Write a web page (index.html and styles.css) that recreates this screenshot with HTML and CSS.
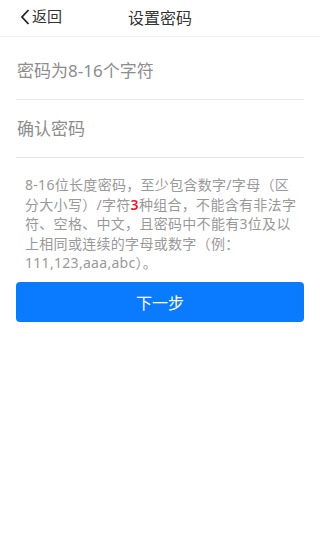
FILE: index.html
```html
<!DOCTYPE html>
<html lang="zh-CN">
<head>
<meta charset="utf-8">
<meta name="viewport" content="width=device-width, initial-scale=1">
<title>设置密码</title>
<link rel="stylesheet" href="styles.css">
</head>
<body>
<header class="nav">
  <a class="back" href="#">
    <svg class="chev" width="10" height="16" viewBox="0 0 10 16"><path d="M8.5 1 L2 8 L8.5 15" fill="none" stroke="#222" stroke-width="1.8"/></svg>
    <span>返回</span>
  </a>
  <h1 class="title">设置密码</h1>
</header>
<main class="form">
  <div class="field"><input class="input" type="password" placeholder="密码为8-16个字符"></div>
  <div class="field"><input class="input" type="password" placeholder="确认密码"></div>
  <p class="tip">8-16位长度密码，至少包含数字/字母（区分大小写）/字符<span class="red">3</span>种组合，不能含有非法字符、空格、中文，且密码中不能有3位及以上相同或连续的字母或数字（例：111,123,aaa,abc）。</p>
  <button class="next" type="button">下一步</button>
</main>
</body>
</html>
```
FILE: styles.css
```css
* { box-sizing: border-box; }
html, body { margin: 0; padding: 0; background: #fff; }
body {
  font-family: "Noto Sans", "Noto Sans CJK SC", sans-serif;
  color: #333;
  width: 320px;
}
.nav {
  position: relative;
  height: 37px;
  border-bottom: 1px solid #f0f0f0;
  display: flex;
  align-items: center;
  justify-content: center;
}
.back {
  position: absolute;
  left: 20px;
  top: 0;
  height: 36px;
  display: flex;
  align-items: center;
  gap: 2px;
  color: #333;
  text-decoration: none;
  font-size: 15px;
}
.chev { display: block; margin-top: -2px; }
.back span { line-height: 1; margin-top: -4px; }
.title {
  margin: -3px 0 0;
  font-size: 16px;
  font-weight: normal;
  color: #333;
}
.form {
  padding: 5px 16px 0;
}
.field {
  height: 58px;
  border-bottom: 1px solid #e6e6e6;
  display: flex;
  align-items: center;
}
.input {
  border: 0;
  outline: 0;
  padding: 0 0 0 1px;
  width: 100%;
  font-family: inherit;
  font-size: 17px;
  color: #333;
  background: transparent;
}
.input::placeholder { color: #8c8c8c; }
.tip {
  margin: 17px 4px 0 9px;
  font-size: 14px;
  line-height: 19.5px;
  color: #999;
  letter-spacing: 0.3px;
}
.red { color: #f0142d; font-weight: 600; }
.next {
  display: block;
  width: 100%;
  height: 40px;
  margin-top: 9px;
  border: 0;
  border-radius: 4px;
  background: #0a7bff;
  color: #fff;
  font-family: inherit;
  font-size: 16px;
}
```
